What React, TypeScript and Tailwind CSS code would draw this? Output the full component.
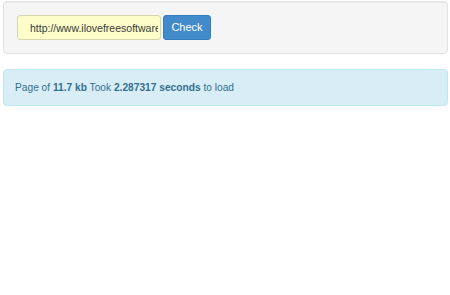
export default function App() {
  return (
    <div className="min-h-[295px] w-[450px] bg-white font-['Liberation_Sans',Arial,sans-serif]">
      {/* Form well */}
      <div className="ml-[3px] mr-[2px] mt-[1px] flex h-[53px] items-start rounded-[4px] border border-[#e3e3e3] bg-[#f5f5f5] pl-[13px] pt-[13px] shadow-[inset_0_1px_1px_rgba(0,0,0,0.05)]">
        <input
          readOnly
          value="http://www.ilovefreesoftware.com"
          className="h-[25px] w-[144px] rounded-[3px] border border-[#d6d6b0] bg-[#fdfdc9] pl-[12px] pr-[2px] text-[10.5px] text-[#3a3a3a] outline-none"
        />
        <button className="ml-[2px] h-[25px] w-[48px] rounded-[3px] border border-[#357ebd] bg-[#428bca] text-[11px] text-white">
          Check
        </button>
      </div>

      {/* Result */}
      <div className="ml-[3px] mr-[2px] mt-[15px] flex h-[37px] items-center rounded-[4px] border border-[#bce8f1] bg-[#d9edf7] pl-[11px] text-[10.2px] text-[#31708f]">
        <span>
          Page of <b>11.7 kb</b> Took <b>2.287317 seconds</b> to load
        </span>
      </div>
    </div>
  )
}
